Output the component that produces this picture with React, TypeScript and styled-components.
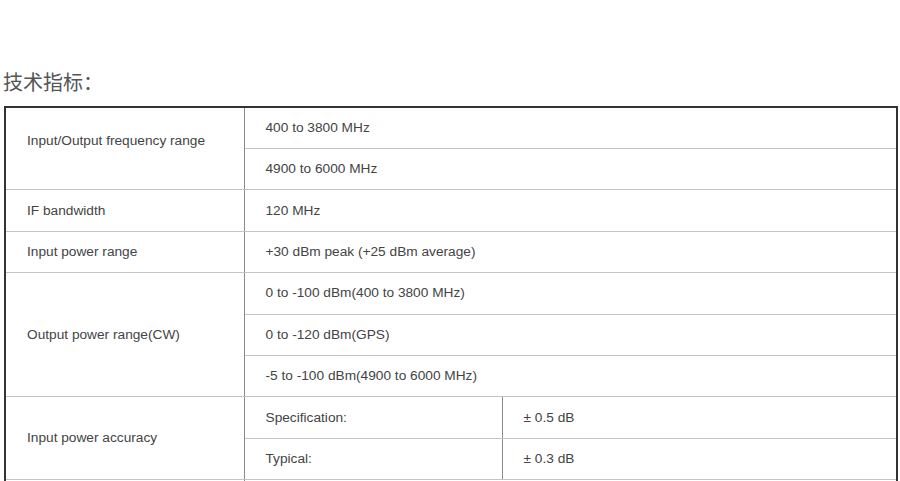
import React from "react";
import styled, { createGlobalStyle } from "styled-components";

const Global = createGlobalStyle`
  html, body { margin: 0; padding: 0; background: #fff; }
  body { font-family: "Liberation Sans", Arial, sans-serif; }
`;

const Page = styled.div`
  padding: 68px 2px 0 3px;
`;

const Title = styled.h3`
  margin: 0 0 10px 0;
  font-family: "Noto Sans CJK SC", "Liberation Sans", sans-serif;
  font-weight: 400;
  font-size: 20px;
  line-height: 28px;
  color: #555;
`;

const Table = styled.table`
  margin-left: 1px;
  width: 894px;
  border-collapse: collapse;
  border: 2px solid #333;
  table-layout: fixed;
`;

const Cell = styled.td<{ $lift?: boolean }>`
  height: 41.42px;
  box-sizing: border-box;
  padding: 0 0 ${(p) => (p.$lift ? "16px" : "0")} 21px;
  font-size: 13.7px;
  line-height: 16px;
  color: #444;
  border-top: 1px solid #c4c4c4;
  border-bottom: 1px solid #c4c4c4;
  border-left: 1px solid #8a8a8a;
  border-right: 1px solid #8a8a8a;
  vertical-align: middle;
`;

type Row = { label?: string; rowSpan?: number; lift?: boolean; value: string; extra?: string };

const rows: Row[] = [
  { label: "Input/Output frequency range", rowSpan: 2, lift: true, value: "400 to 3800 MHz" },
  { value: "4900 to 6000 MHz" },
  { label: "IF bandwidth", value: "120 MHz" },
  { label: "Input power range", value: "+30 dBm peak (+25 dBm average)" },
  { label: "Output power range(CW)", rowSpan: 3, value: "0 to -100 dBm(400 to 3800 MHz)" },
  { value: "0 to -120 dBm(GPS)" },
  { value: "-5 to -100 dBm(4900 to 6000 MHz)" },
  { label: "Input power accuracy", rowSpan: 2, value: "Specification:", extra: "± 0.5 dB" },
  { value: "Typical:", extra: "± 0.3 dB" },
  { label: "", value: "" },
];

export default function App() {
  return (
    <>
      <Global />
      <Page>
        <Title>技术指标：</Title>
        <Table>
          <colgroup>
            <col style={{ width: 239 }} />
            <col style={{ width: 258 }} />
            <col />
          </colgroup>
          <tbody>
            {rows.map((r, i) => (
              <tr key={i}>
                {r.label !== undefined && (
                  <Cell rowSpan={r.rowSpan} $lift={r.lift}>
                    {r.label}
                  </Cell>
                )}
                {r.extra ? (
                  <>
                    <Cell>{r.value}</Cell>
                    <Cell>{r.extra}</Cell>
                  </>
                ) : (
                  <Cell colSpan={2}>{r.value}</Cell>
                )}
              </tr>
            ))}
          </tbody>
        </Table>
      </Page>
    </>
  );
}
